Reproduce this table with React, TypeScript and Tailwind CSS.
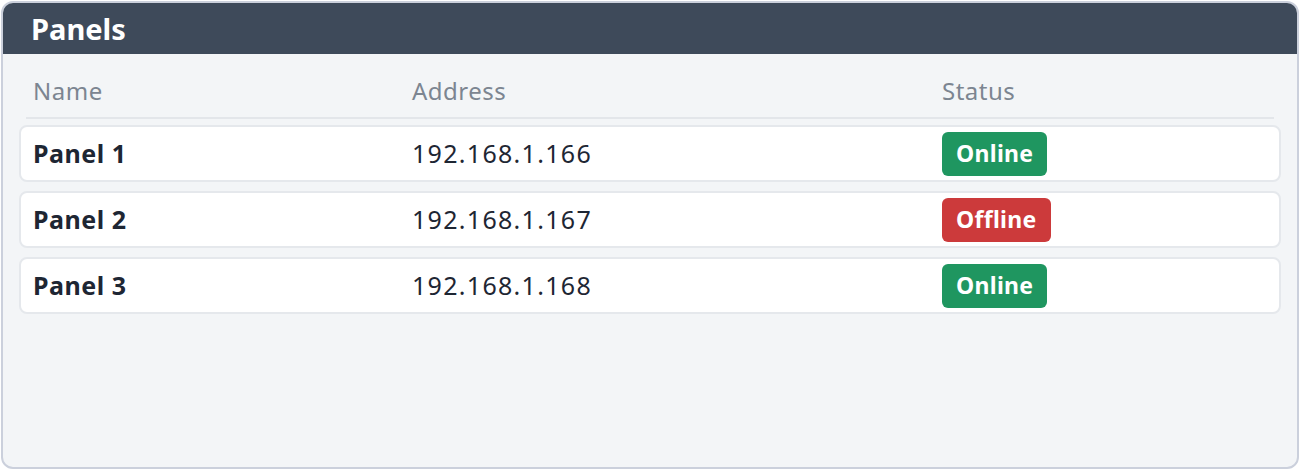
const panels = [
  { name: "Panel 1", address: "192.168.1.166", online: true },
  { name: "Panel 2", address: "192.168.1.167", online: false },
  { name: "Panel 3", address: "192.168.1.168", online: true },
];

const font = { fontFamily: '"Noto Sans", "Open Sans", sans-serif' };

const StatusBadge = ({ online }: { online: boolean }) => (
  <span
    className={`inline-flex h-[44px] items-center rounded-[6px] px-[14px] text-[23px] font-bold tracking-[0.3px] text-white ${
      online ? "bg-[#1f9660]" : "bg-[#cc3a3b]"
    }`}
  >
    {online ? "Online" : "Offline"}
  </span>
);

export default function App() {
  return (
    <div className="h-[470px] w-[1300px] bg-white p-px" style={font}>
      <div className="flex h-[468px] flex-col overflow-hidden rounded-[12px] border-2 border-[#cbd0dc] bg-[#f3f5f7]">
        <div className="flex h-[51px] shrink-0 items-center bg-[#3e4a5a] px-[28px]">
          <h1 className="text-[29px] font-bold leading-none text-white">Panels</h1>
        </div>
        <div className="px-[16px] pt-[11px]">
          <div className="mx-[7px] grid h-[54px] grid-cols-[379px_530px_1fr] items-center border-b-2 border-[#e3e6ea] pl-[7px] text-[24px] tracking-[0.5px] text-[#7c8591]">
            <span>Name</span>
            <span>Address</span>
            <span>Status</span>
          </div>
          <div className="mt-[6px] flex flex-col gap-[9px]">
            {panels.map((p) => (
              <div
                key={p.name}
                className="grid h-[57px] grid-cols-[379px_530px_1fr] items-center rounded-[8px] border-2 border-[#e5e8ec] bg-white pl-[12px] text-[25px] text-[#1e2633]"
              >
                <span className="font-bold tracking-[0.5px]">{p.name}</span>
                <span className="tracking-[1.3px]">{p.address}</span>
                <span>
                  <StatusBadge online={p.online} />
                </span>
              </div>
            ))}
          </div>
        </div>
      </div>
    </div>
  );
}
